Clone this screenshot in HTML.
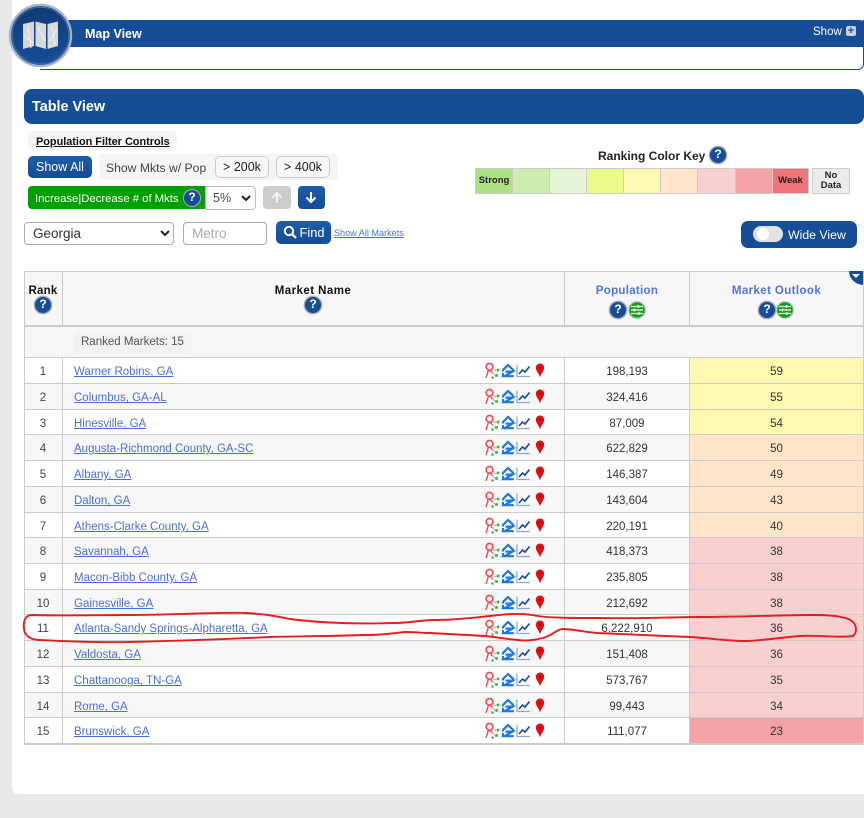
<!DOCTYPE html>
<html><head><meta charset="utf-8"><title>Market Rankings</title>
<style>
*{box-sizing:border-box}
html,body{margin:0;padding:0;width:864px;height:818px;overflow:hidden;background:#e9e9e9;font-family:"Liberation Sans",sans-serif;color:#333}
.a{position:absolute}
#panel{left:12px;top:0;width:852px;height:794px;background:#fff;border-bottom-left-radius:6px}
.btn{position:absolute;border-radius:5px;text-align:center;font-size:12.5px;white-space:nowrap}
.blue{background:linear-gradient(#1f5ba6,#154d96);color:#fff}
.lite{background:#f8f8f8;border:1px solid #ccc;color:#222}
.q{position:absolute;width:18px;height:18px;border-radius:50%;background:#154d96;border:1.5px solid #aab;color:#fff;font:bold 12px/15px "Liberation Sans",sans-serif;text-align:center;box-shadow:0 0 1px #666}
.k{position:absolute;top:168px;height:26px;border:1px solid #ccc;font:bold 9.5px/24px "Liberation Sans",sans-serif;text-align:center;color:#222}
.r{position:absolute;left:24px;width:840px;height:26px;border-top:1px solid #ccc;font-size:11.5px}
.r span{position:absolute;top:0;line-height:28px;height:26px}
.n{left:0;width:38px;text-align:center;color:#444}
.m{left:50px}
.m a{color:#4a6fd8;text-decoration:underline}
.p{left:541px;width:124px;text-align:center;color:#333}
.o{left:665px;width:175px;text-align:center;color:#333}
.w{background:#fff}.g{background:#f7f7f7}
.y{background:#fdf9b0}.f{background:#ffe6c8}.c{background:#f8d0d0}.d{background:#f4a2a6}
.vl{position:absolute;width:1px;background:#ccc}
.th{position:absolute;font:bold 11.5px "Liberation Sans",sans-serif;letter-spacing:.45px;text-align:center}
.ic{position:absolute;left:460px;top:4px;width:64px;height:18px}
</style></head>
<body>
<svg width="0" height="0" style="position:absolute">
<symbol id="icons" viewBox="0 0 64 18">
<circle cx="5.5" cy="4.8" r="3.4" fill="none" stroke="#f04a4a" stroke-width="1.6"/>
<path d="M4.5 8 2 16M6.5 8.3 8.5 11" stroke="#f04a4a" stroke-width="1.4" fill="none"/>
<path d="M9 8 12 8.5M8.5 11 11 13" stroke="#aaa" stroke-width=".9"/>
<circle cx="14" cy="8" r="1.5" fill="#42b648"/><circle cx="12.5" cy="13.5" r="1.5" fill="#42b648"/><circle cx="8.5" cy="15.5" r="1.3" fill="#42b648"/>
<path d="M19 9.5V8L24 3 29.5 8.2" fill="none" stroke="#1a78e8" stroke-width="2.2"/>
<path d="M21.5 9.6H28.5L20.5 14.2H29.8" fill="none" stroke="#1a78e8" stroke-width="2.2"/>
<path d="M19 11V15M29 7V10" stroke="#1a78e8" stroke-width="2"/>
<path d="M33 2.5V14.5H46" fill="none" stroke="#8fa6c8" stroke-width="1.2"/>
<path d="M35 12 38.5 8 41 10 45.5 4.5" fill="none" stroke="#1d4f94" stroke-width="1.7"/>
<path d="M56 1.5C53.4 1.5 51.8 3.6 51.8 5.8 51.8 8.8 55 11.5 56 15.5 57 11.5 60.2 8.8 60.2 5.8 60.2 3.6 58.6 1.5 56 1.5Z" fill="#e01010"/>
<circle cx="56" cy="5.6" r="1.2" fill="#9c0a0a"/>
</symbol>
<symbol id="filt" viewBox="0 0 18 18">
<circle cx="9" cy="9" r="8.2" fill="#09a50f" stroke="#b5b5b5" stroke-width="1.2"/>
<path d="M3 5.5H15M3 9H15M3 12.5H15" stroke="#fff" stroke-width="1.3"/>
<path d="M10.5 4V7M6.5 7.5V10.5M11 11V14" stroke="#fff" stroke-width="1.2"/>
</symbol>
</svg>

<div class="a" id="panel"></div>

<!-- Map View -->
<div class="a" style="left:40px;top:20px;width:824px;height:50px;background:#fff;border:1px solid #154d96;border-top:0;border-left:0;border-bottom-right-radius:6px"></div>
<div class="a" style="left:40px;top:20px;width:824px;height:27px;background:#154d96;border-top-right-radius:4px"></div>
<div class="a" style="left:85px;top:27px;color:#fff;font:bold 12.5px/15px 'Liberation Sans',sans-serif">Map View</div>
<div class="a" style="left:813px;top:25px;color:#fff;font-size:11.5px;line-height:14px">Show</div>
<div class="a" style="left:846px;top:26px;width:10px;height:10px;background:#c9cfdc;border-radius:2px;color:#154d96;font:bold 11px/10px 'Liberation Sans',sans-serif;text-align:center">+</div>
<svg class="a" style="left:8px;top:3px" width="66" height="66" viewBox="0 0 66 66">
<defs><linearGradient id="lg" x1="0" y1="0" x2="0" y2="1"><stop offset="0" stop-color="#0f3a73"/><stop offset="1" stop-color="#174f9c"/></linearGradient></defs>
<circle cx="32.5" cy="32.5" r="30.5" fill="url(#lg)" stroke="#a3b3cd" stroke-width="2.4"/>
<circle cx="32.5" cy="32.5" r="28.2" fill="none" stroke="#4d6d9f" stroke-width="1"/>
<path d="M15 21 26 18.5V43L15 46ZM27.5 18.5 38 21V46L27.5 43ZM39.5 21 50 18.5V43L39.5 46Z" fill="#d8d8d8"/>
<path d="M16 32 25 40M30 24 37 38M42 38 49 26M20 24 23 45M44 24 47 42" stroke="#f2f2f2" stroke-width="1" fill="none"/>
</svg>

<!-- Table View header -->
<div class="a" style="left:24px;top:89px;width:840px;height:35px;background:#154d96;border-radius:8px"></div>
<div class="a" style="left:32px;top:98px;color:#fff;font:bold 14.4px/18px 'Liberation Sans',sans-serif">Table View</div>

<!-- Filter controls -->
<div class="a" style="left:28px;top:131px;width:149px;height:19px;background:#f5f5f5;border-radius:4px"></div>
<div class="a" style="left:36px;top:135px;font:bold 10.9px/14px 'Liberation Sans',sans-serif;text-decoration:underline;color:#111">Population Filter Controls</div>
<div class="btn blue" style="left:28px;top:156px;width:64px;height:22px;line-height:23px">Show All</div>
<div class="a" style="left:99px;top:154px;width:239px;height:26px;background:#f5f5f5;border-radius:3px"></div>
<div class="a" style="left:106px;top:160px;font-size:12.2px;line-height:16px;color:#444;white-space:nowrap">Show Mkts w/ Pop</div>
<div class="btn lite" style="left:215px;top:156px;width:54px;height:22px;line-height:21px">&gt; 200k</div>
<div class="btn lite" style="left:276px;top:156px;width:54px;height:22px;line-height:21px">&gt; 400k</div>

<div class="a" style="left:28px;top:186px;width:178px;height:23px;background:#00a000;border-radius:4px 0 0 4px;color:#fff;font-size:11.3px;line-height:26px;padding-left:7px;white-space:nowrap">Increase|Decrease # of Mkts</div>
<div class="q" style="left:183px;top:189px">?</div>
<div class="a" style="left:205px;top:186px;width:51px;height:24px;background:#fff;border:1px solid #bbb;border-radius:0 4px 4px 0;font-size:12.5px;line-height:23px;padding-left:7px;color:#444">5%</div>
<svg class="a" style="left:241px;top:195px" width="10" height="7" viewBox="0 0 10 7"><path d="M1 1 5 5 9 1" fill="none" stroke="#222" stroke-width="2"/></svg>
<div class="a" style="left:263px;top:186px;width:28px;height:23px;background:#ccc;border-radius:4px"></div>
<svg class="a" style="left:271px;top:191px" width="12" height="13" viewBox="0 0 12 13"><path d="M6 12V2M1.5 6.5 6 2 10.5 6.5" fill="none" stroke="#f2f2f2" stroke-width="2"/></svg>
<div class="a blue" style="left:298px;top:186px;width:27px;height:23px;border-radius:4px"></div>
<svg class="a" style="left:305px;top:191px" width="12" height="13" viewBox="0 0 12 13"><path d="M6 1V11M1.5 6.5 6 11 10.5 6.5" fill="none" stroke="#fff" stroke-width="2"/></svg>

<div class="a" style="left:24px;top:222px;width:150px;height:23px;background:#fff;border:1px solid #aaa;border-radius:4px;font-size:13.5px;line-height:21px;padding-left:8px;color:#333">Georgia</div>
<svg class="a" style="left:160px;top:230px" width="10" height="7" viewBox="0 0 10 7"><path d="M1 1 5 5 9 1" fill="none" stroke="#222" stroke-width="2"/></svg>
<div class="a" style="left:183px;top:222px;width:84px;height:23px;background:#fff;border:1px solid #aaa;border-radius:4px;font-size:13.5px;line-height:21px;padding-left:8px;color:#aaa">Metro</div>
<div class="btn blue" style="left:276px;top:221px;width:55px;height:23px;line-height:23px;padding-left:17px;font-size:12.8px">Find</div>
<svg class="a" style="left:283px;top:225px" width="14" height="14" viewBox="0 0 14 14"><circle cx="6" cy="6" r="4.2" fill="none" stroke="#fff" stroke-width="2"/><path d="M9 9 13 13" stroke="#fff" stroke-width="2.2"/></svg>
<div class="a" style="left:334px;top:227px;font-size:9px;line-height:13px;color:#4a6fd8;text-decoration:underline;letter-spacing:.05px;white-space:nowrap">Show All Markets</div>

<!-- Key -->
<div class="a" style="left:598px;top:149px;font:bold 12px/15px 'Liberation Sans',sans-serif;color:#222;white-space:nowrap">Ranking Color Key</div>
<div class="q" style="left:709px;top:146px">?</div>
<div class="k" style="left:475px;width:38px;background:#b0e084">Strong</div>
<div class="k" style="left:512px;width:38px;background:#cdedb0"></div>
<div class="k" style="left:549px;width:38px;background:#e5f5d8"></div>
<div class="k" style="left:586px;width:38px;background:#ecfb8c"></div>
<div class="k" style="left:623px;width:38px;background:#fdf9b0"></div>
<div class="k" style="left:660px;width:38px;background:#ffe6c8"></div>
<div class="k" style="left:697px;width:39px;background:#f8d0d0"></div>
<div class="k" style="left:735px;width:38px;background:#f4a2a6"></div>
<div class="k" style="left:772px;width:37px;background:#ef757a">Weak</div>
<div class="k" style="left:812px;width:38px;background:#ebebeb;line-height:10px;padding-top:2px">No<br>Data</div>

<div class="a" style="left:741px;top:221px;width:116px;height:27px;background:#154d96;border-radius:7px"></div>
<div class="a" style="left:753px;top:226px;width:30px;height:16px;background:#e2e2e2;border-radius:8px"></div>
<div class="a" style="left:757px;top:228px;width:12px;height:12px;background:#fff;border-radius:50%"></div>
<div class="a" style="left:788px;top:227px;color:#fff;font-size:12.3px;line-height:16px;white-space:nowrap">Wide View</div>

<!-- Table -->
<div class="a" style="left:24px;top:271px;width:840px;height:87px;background:#f7f7f7;border-top:1px solid #ccc"></div>
<div class="a" style="left:24px;top:325px;width:840px;height:2px;background:#ccc"></div>
<div class="th" style="left:24px;width:38px;top:285px;color:#111;letter-spacing:.2px">Rank</div>
<div class="q" style="left:34px;top:296px">?</div>
<div class="th" style="left:213px;width:200px;top:285px;color:#111">Market Name</div>
<div class="q" style="left:304px;top:296px">?</div>
<div class="th" style="left:565px;width:124px;top:285px;color:#4f76d9;letter-spacing:.3px">Population</div>
<div class="q" style="left:609px;top:301px">?</div>
<svg class="a" style="left:628px;top:301px" width="18" height="18"><use href="#filt"/></svg>
<div class="th" style="left:689px;width:175px;top:285px;color:#4f76d9;letter-spacing:.4px">Market Outlook</div>
<div class="q" style="left:758px;top:301px">?</div>
<svg class="a" style="left:776px;top:301px" width="18" height="18"><use href="#filt"/></svg>
<svg class="a" style="left:849px;top:271px" width="15" height="14" viewBox="0 0 15 14"><path d="M0 0H15V14C7 14 0 8 0 0Z" fill="#154d96"/><path d="M3 3H11L7 7Z" fill="#fff"/></svg>

<div class="a" style="left:74px;top:331px;width:118px;height:22px;background:#f2f2f2;border-radius:6px;font-size:11.5px;line-height:23px;padding-left:7px;color:#555;white-space:nowrap">Ranked Markets: 15</div>

<div class="r w" style="top:357px"><span class="n">1</span><span class="m"><a>Warner Robins, GA</a></span><svg class="ic"><use href="#icons"/></svg><span class="p">198,193</span><span class="o y">59</span></div>
<div class="r g" style="top:383px"><span class="n">2</span><span class="m"><a>Columbus, GA-AL</a></span><svg class="ic"><use href="#icons"/></svg><span class="p">324,416</span><span class="o y">55</span></div>
<div class="r w" style="top:409px"><span class="n">3</span><span class="m"><a>Hinesville, GA</a></span><svg class="ic"><use href="#icons"/></svg><span class="p">87,009</span><span class="o y">54</span></div>
<div class="r g" style="top:434px"><span class="n">4</span><span class="m"><a>Augusta-Richmond County, GA-SC</a></span><svg class="ic"><use href="#icons"/></svg><span class="p">622,829</span><span class="o f">50</span></div>
<div class="r w" style="top:460px"><span class="n">5</span><span class="m"><a>Albany, GA</a></span><svg class="ic"><use href="#icons"/></svg><span class="p">146,387</span><span class="o f">49</span></div>
<div class="r g" style="top:486px"><span class="n">6</span><span class="m"><a>Dalton, GA</a></span><svg class="ic"><use href="#icons"/></svg><span class="p">143,604</span><span class="o f">43</span></div>
<div class="r w" style="top:512px"><span class="n">7</span><span class="m"><a>Athens-Clarke County, GA</a></span><svg class="ic"><use href="#icons"/></svg><span class="p">220,191</span><span class="o f">40</span></div>
<div class="r g" style="top:537px"><span class="n">8</span><span class="m"><a>Savannah, GA</a></span><svg class="ic"><use href="#icons"/></svg><span class="p">418,373</span><span class="o c">38</span></div>
<div class="r w" style="top:563px"><span class="n">9</span><span class="m"><a>Macon-Bibb County, GA</a></span><svg class="ic"><use href="#icons"/></svg><span class="p">235,805</span><span class="o c">38</span></div>
<div class="r g" style="top:589px"><span class="n">10</span><span class="m"><a>Gainesville, GA</a></span><svg class="ic"><use href="#icons"/></svg><span class="p">212,692</span><span class="o c">38</span></div>
<div class="r w" style="top:614px"><span class="n">11</span><span class="m"><a>Atlanta-Sandy Springs-Alpharetta, GA</a></span><svg class="ic"><use href="#icons"/></svg><span class="p">6,222,910</span><span class="o c">36</span></div>
<div class="r g" style="top:640px"><span class="n">12</span><span class="m"><a>Valdosta, GA</a></span><svg class="ic"><use href="#icons"/></svg><span class="p">151,408</span><span class="o c">36</span></div>
<div class="r w" style="top:666px"><span class="n">13</span><span class="m"><a>Chattanooga, TN-GA</a></span><svg class="ic"><use href="#icons"/></svg><span class="p">573,767</span><span class="o c">35</span></div>
<div class="r g" style="top:692px"><span class="n">14</span><span class="m"><a>Rome, GA</a></span><svg class="ic"><use href="#icons"/></svg><span class="p">99,443</span><span class="o c">34</span></div>
<div class="r w" style="top:717px"><span class="n">15</span><span class="m"><a>Brunswick, GA</a></span><svg class="ic"><use href="#icons"/></svg><span class="p">111,077</span><span class="o d">23</span></div>

<div class="a" style="left:24px;top:743px;width:840px;height:2px;background:#ccc"></div>
<div class="vl" style="left:24px;top:271px;height:473px"></div>
<div class="vl" style="left:62px;top:271px;height:54px"></div>
<div class="vl" style="left:62px;top:358px;height:386px"></div>
<div class="vl" style="left:564px;top:271px;height:54px"></div>
<div class="vl" style="left:564px;top:358px;height:386px"></div>
<div class="vl" style="left:689px;top:271px;height:54px"></div>
<div class="vl" style="left:689px;top:358px;height:386px"></div>
<div class="vl" style="left:863px;top:271px;height:473px"></div>

<!-- red hand-drawn outline -->
<svg class="a" style="left:0;top:0" width="864" height="818" viewBox="0 0 864 818">
<path d="M32 615C60 616 100 615 130 615C170 615 220 612 245 613C265 614 275 616 290 619C320 623 360 624 395 623C410 623 420 620 435 620C455 620 470 618 490 616C505 614 520 613 532 615C545 618 570 618 600 618C640 619 670 617 700 617C740 617 780 615 815 615C835 615 848 617 853 622C857 626 857 633 853 636C840 638 820 635 800 636C775 638 760 641 745 641C725 641 710 638 690 637C660 636 625 634 597 633C585 632 572 629 562 629C556 630 553 635 543 638C535 640 525 641 518 640C505 639 495 637 485 636C465 635 450 634 430 633C422 633 415 632 405 632C395 633 385 635 365 635C340 636 310 636 270 637C230 639 170 641 130 642C95 643 60 641 40 640C30 640 24 635 24 628C23 622 25 615 32 615Z" fill="none" stroke="#e41e20" stroke-width="1.9"/>
</svg>
</body></html>
